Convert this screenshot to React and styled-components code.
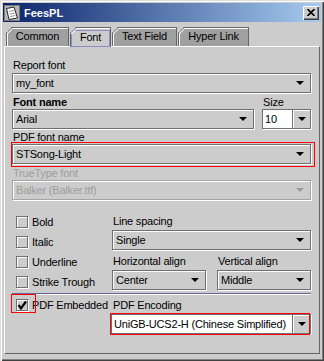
import React from 'react';
import styled, { createGlobalStyle, css } from 'styled-components';

const GlobalStyle = createGlobalStyle`
  html, body { margin: 0; padding: 0; background: #cccccc; }
  body {
    font-family: "Liberation Sans", Arial, sans-serif;
    font-size: 11px;
    letter-spacing: -0.2px;
    color: #000;
  }
  * { box-sizing: border-box; }
`;

const Window = styled.div`
  width: 324px;
  height: 361px;
  padding: 3px;
  display: flex;
  flex-direction: column;
  background: #cccccc;
  box-shadow:
    inset 1px 1px 0 #dedede,
    inset 2px 2px 0 #ffffff,
    inset -1px -1px 0 #404040,
    inset -2px -2px 0 #808080;
`;

const TitleBar = styled.div`
  height: 19px;
  flex: none;
  display: flex;
  align-items: center;
  padding: 0 2px 0 1px;
  background: linear-gradient(to right, #0a246a, #a6caf0);
  color: #fff;
  font-weight: bold;
  letter-spacing: 0;
`;

const Title = styled.span`
  flex: 1;
  margin-left: 4px;
`;

const CloseButton = styled.div`
  width: 16px;
  height: 14px;
  display: flex;
  align-items: center;
  justify-content: center;
  background: #cccccc;
  box-shadow:
    inset 1px 1px 0 #ffffff,
    inset -1px -1px 0 #404040,
    inset -2px -2px 0 #808080;
`;

const Body = styled.div`
  flex: 1;
  display: flex;
  flex-direction: column;
  padding: 5px 1px 4px 1px;
`;

const TabStrip = styled.div`
  position: relative;
  z-index: 1;
  display: flex;
  align-items: flex-start;
  height: 19px;
  padding-left: 2px;
`;

const Tab = styled.div`
  position: relative;
  width: ${p => p.$w}px;
  height: ${p => (p.$active ? 20 : 19)}px;
  margin-right: 1px;
  padding-bottom: 2px;
  display: flex;
  align-items: center;
  justify-content: center;
  background: ${p => (p.$active ? '#cccccc' : '#a0a0a0')};
  border: 1px solid #666666;
  border-bottom: none;
  box-shadow: inset 1px 1px 0 #ffffff;
  clip-path: polygon(6px 0, 100% 0, 100% 100%, 0 100%, 0 6px);
  white-space: nowrap;

  &::before {
    content: '';
    position: absolute;
    left: -2px;
    top: 2px;
    width: 8.5px;
    height: 1px;
    background: #666666;
    transform: rotate(-45deg);
  }
  &::after {
    content: '';
    position: absolute;
    left: -1px;
    top: 3px;
    width: 7px;
    height: 1px;
    background: #ffffff;
    transform: rotate(-45deg);
  }
`;

const TabFocus = styled.span`
  position: absolute;
  inset: 2px 0 0 0;
  border: 1px solid #8c8cc8;
`;

const TabText = styled.span`
  position: relative;
`;

const Panel = styled.div`
  flex: 1;
  display: flex;
  flex-direction: column;
  padding: 11px 8px 0 7px;
  border-style: solid;
  border-width: 1px;
  border-color: #ffffff #666666 #666666 #ffffff;
`;

const Label = styled.div`
  height: 14px;
  line-height: 14px;
  margin-top: ${p => p.$mt || 0}px;
  padding-left: 1px;
  white-space: nowrap;
  font-weight: ${p => (p.$bold ? 'bold' : 'normal')};
  color: ${p => (p.$disabled ? '#9c9c9c' : '#000000')};
`;

const ComboBox = styled.div`
  position: relative;
  display: flex;
  height: 20px;
  margin-top: ${p => p.$mt || 0}px;
  margin-left: ${p => p.$ml || 0}px;
  border: 1px solid ${p => (p.$disabled ? '#a4a4a4' : '#707070')};
  box-shadow: 1px 1px 0 #ffffff, inset 1px 1px 0 #ffffff;

  ${p => p.$mark && css`
    &::after {
      content: '';
      position: absolute;
      inset: ${p.$mark};
      border: 1px solid #ff0000;
      pointer-events: none;
    }
  `}
`;

const ComboText = styled.div`
  flex: 1;
  min-width: 0;
  padding-left: ${p => (p.$editable ? 2 : 3)}px;
  line-height: 18px;
  white-space: nowrap;
  overflow: hidden;
  background: ${p => (p.$editable ? '#ffffff' : 'transparent')};
  color: ${p => (p.$disabled ? '#9c9c9c' : '#000000')};
`;

const ArrowButton = styled.div`
  flex: none;
  width: ${p => (p.$editable ? 18 : 20)}px;
  display: flex;
  align-items: center;
  justify-content: center;

  ${p => p.$editable && css`
    border-left: 1px solid #707070;
    box-shadow: inset 1px 1px 0 #ffffff;
  `}
`;

const Arrow = styled.span`
  width: 0;
  height: 0;
  border-left: 4px solid transparent;
  border-right: 4px solid transparent;
  border-top: 4px solid ${p => (p.$disabled ? '#9c9c9c' : '#000000')};
`;

const FontRow = styled.div`
  display: flex;
  gap: 8px;
  margin-top: 2px;
`;

const Field = styled.div`
  display: flex;
  flex-direction: column;
  flex: ${p => (p.$w ? 'none' : 1)};
  width: ${p => (p.$w ? `${p.$w}px` : 'auto')};
`;

const OptionGrid = styled.div`
  display: grid;
  grid-template-columns: 100px 1fr;
  margin-top: ${p => p.$mt || 0}px;
`;

const CheckColumn = styled.div`
  display: flex;
  flex-direction: column;
`;

const SideColumn = styled.div`
  display: flex;
  flex-direction: column;
  padding-top: ${p => p.$pt || 0}px;
`;

const AlignRow = styled.div`
  display: grid;
  grid-template-columns: 1fr 1fr;
  column-gap: 11px;
  margin-top: 4px;
`;

const CheckRow = styled.div`
  display: flex;
  align-items: center;
  gap: 4px;
  height: 20px;
  padding-left: 4px;
  white-space: nowrap;
`;

const Box = styled.span`
  position: relative;
  flex: none;
  width: 12px;
  height: 12px;
  display: flex;
  align-items: center;
  justify-content: center;
  background: #cccccc;
  border: 1px solid #707070;
  box-shadow: 1px 1px 0 #ffffff, inset 1px 1px 0 #ffffff;

  ${p => p.$mark && css`
    &::after {
      content: '';
      position: absolute;
      inset: ${p.$mark};
      border: 1px solid #ff0000;
      pointer-events: none;
    }
  `}
`;

const Separator = styled.div`
  height: 2px;
  margin-top: 1px;
  background: #666699;
  border-bottom: 1px solid #ffffff;
`;

const AppIcon = () => (
  <svg width="16" height="16" viewBox="0 0 16 16">
    <rect x="0.5" y="0.5" width="15" height="15" fill="#b8b8b8" stroke="#7a7a7a" />
    <path d="M2.5 3.5 L10 2 L13.5 13 L5 14.5 Z" fill="#ffffff" stroke="#222222" />
    <path d="M5 6.5 L10 5.5 M5.5 9 L11 8 M6 11.5 L11.5 10.5" stroke="#9a9a9a" />
  </svg>
);

const CloseGlyph = () => (
  <svg width="8" height="7" viewBox="0 0 8 7">
    <path d="M0.5 0 L7.5 7 M7.5 0 L0.5 7" stroke="#000000" strokeWidth="1.6" />
  </svg>
);

const CheckGlyph = () => (
  <svg width="10" height="10" viewBox="0 0 10 10">
    <path d="M1.5 5 L4 8.3 L9 1.5" fill="none" stroke="#000000" strokeWidth="2.2" />
  </svg>
);

function Combo({ value, editable, disabled, mark, mt, ml }) {
  return (
    <ComboBox $mt={mt} $ml={ml} $mark={mark} $disabled={disabled}>
      <ComboText $editable={editable} $disabled={disabled}>{value}</ComboText>
      <ArrowButton $editable={editable}>
        <Arrow $disabled={disabled} />
      </ArrowButton>
    </ComboBox>
  );
}

function Check({ label, checked, mark }) {
  return (
    <CheckRow>
      <Box $mark={mark}>{checked && <CheckGlyph />}</Box>
      <span>{label}</span>
    </CheckRow>
  );
}

const tabs = [
  { name: 'Common', w: 63 },
  { name: 'Font', w: 41, active: true },
  { name: 'Text Field', w: 65 },
  { name: 'Hyper Link', w: 71 },
];

export default function App() {
  return (
    <>
      <GlobalStyle />
      <Window>
        <TitleBar>
          <AppIcon />
          <Title>FeesPL</Title>
          <CloseButton><CloseGlyph /></CloseButton>
        </TitleBar>
        <Body>
          <TabStrip>
            {tabs.map(t => (
              <Tab key={t.name} $w={t.w} $active={t.active}>
                {t.active && <TabFocus />}
                <TabText>{t.name}</TabText>
              </Tab>
            ))}
          </TabStrip>
          <Panel>
            <Label>Report font</Label>
            <Combo mt={1} value="my_font" />

            <FontRow>
              <Field>
                <Label $bold>Font name</Label>
                <Combo value="Arial" />
              </Field>
              <Field $w={49}>
                <Label>Size</Label>
                <Combo editable value="10" />
              </Field>
            </FontRow>

            <Label $mt={1}>PDF font name</Label>
            <Combo value="STSong-Light" mark="-3px -5px -4px -2px" />

            <Label $mt={2} $disabled>TrueType font</Label>
            <Combo disabled value="Balker (Balker.ttf)" />

            <OptionGrid $mt={12}>
              <CheckColumn>
                <Check label="Bold" />
                <Check label="Italic" />
                <Check label="Underline" />
                <Check label="Strike Trough" />
              </CheckColumn>
              <SideColumn $pt={2}>
                <Label>Line spacing</Label>
                <Combo mt={2} value="Single" />
                <AlignRow>
                  <Field>
                    <Label>Horizontal align</Label>
                    <Combo mt={2} value="Center" />
                  </Field>
                  <Field>
                    <Label>Vertical align</Label>
                    <Combo mt={2} value="Middle" />
                  </Field>
                </AlignRow>
              </SideColumn>
            </OptionGrid>

            <Separator />

            <OptionGrid>
              <CheckColumn>
                <Check label="PDF Embedded" checked mark="-6px -9px -3px -6px" />
              </CheckColumn>
              <SideColumn $pt={3}>
                <Label>PDF Encoding</Label>
                <Combo
                  mt={2}
                  ml={-1}
                  editable
                  value="UniGB-UCS2-H (Chinese Simplified)"
                  mark="-2px 0 -2px -2px"
                />
              </SideColumn>
            </OptionGrid>
          </Panel>
        </Body>
      </Window>
    </>
  );
}
